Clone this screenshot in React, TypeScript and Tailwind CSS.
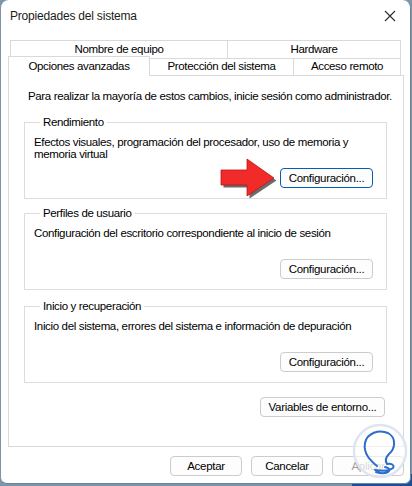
import React from 'react';

const font = { fontFamily: '"Liberation Sans", Arial, sans-serif' };

const Btn = ({ label, focused = false, disabled = false, w = 'w-[93px]' }: { label: string; focused?: boolean; disabled?: boolean; w?: string }) => (
  <button
    className={`${w} h-[20px] rounded-[4px] text-[11.5px] tracking-[-0.3px] leading-[18px] bg-[#fdfdfd] border ${
      focused ? 'border-[#005fb8]' : 'border-[#cccccc]'
    } ${disabled ? 'text-[#9d9d9d]' : 'text-black'}`}
  >
    {label}
  </button>
);

const Group = ({ title, lines, children }: { title: string; lines: string[]; children?: React.ReactNode }) => (
  <fieldset className="border border-[#dcdcdc] ml-[15px] w-[363px] pl-[9px] pr-[13px] pb-[10px]">
    <legend className="ml-[6px] px-[3px] leading-[14px]">{title}</legend>
    <div className="pt-[7px] h-[33px] leading-[12px]">
      {lines.map((l) => (
        <div key={l}>{l}</div>
      ))}
    </div>
    <div className="flex justify-end mt-[6px]">{children}</div>
  </fieldset>
);

export default function App() {
  return (
    <div className="w-[412px] h-[486px] bg-[#7d95a8] relative overflow-hidden text-[11.5px] tracking-[-0.35px]" style={font}>
      <div className="absolute right-0 bottom-0 w-[60px] h-[12px] bg-[#1b4f9c]" />
      <div className="relative ml-px w-[410px] h-[484px] bg-white rounded-t-[8px] rounded-b-[6px] border-r border-b border-[#6a8499] flex flex-col text-black">
        {/* title bar */}
        <div className="h-[32px] flex items-center justify-between pl-[9px] pr-[10px]">
          <span className="text-[12px] tracking-[-0.2px] text-[#1b1b1b]">Propiedades del sistema</span>
          <svg width="12" height="12" viewBox="0 0 12 12" className="mr-[4px]">
            <path d="M1 1 L11 11 M11 1 L1 11" stroke="#2b2b2b" strokeWidth="1.1" />
          </svg>
        </div>

        {/* tabs */}
        <div className="mt-[8px] ml-[9px] flex h-[18px]">
          <div className="w-[217px] border-t border-l border-[#d9d9d9] flex items-center justify-center">Nombre de equipo</div>
          <div className="w-[174px] border-t border-l border-r border-[#d9d9d9] flex items-center justify-center">Hardware</div>
        </div>
        <div className="ml-[7px] flex h-[18px] relative z-10">
          <div className="w-[142px] h-[20px] -mt-[2px] border-t border-l border-r border-[#d9d9d9] bg-white flex items-start justify-center pt-[1px]">
            Opciones avanzadas
          </div>
          <div className="w-[143px] border-t border-b border-[#d9d9d9] flex items-center justify-center">Protección del sistema</div>
          <div className="w-[108px] border-t border-l border-r border-b border-[#d9d9d9] flex items-center justify-center">Acceso remoto</div>
        </div>

        {/* panel */}
        <div className="ml-[7px] -mt-px w-[396px] h-[372px] border border-[#d9d9d9] flex flex-col">
          <p className="pl-[19px] pt-[13px] leading-[15px]">
            Para realizar la mayoría de estos cambios, inicie sesión como administrador.
          </p>
          <div className="mt-[11px]">
            <Group title="Rendimiento" lines={['Efectos visuales, programación del procesador, uso de memoria y', 'memoria virtual']}>
              <Btn label="Configuración..." focused />
            </Group>
          </div>
          <div className="mt-[7px]">
            <Group title="Perfiles de usuario" lines={['Configuración del escritorio correspondiente al inicio de sesión']}>
              <Btn label="Configuración..." />
            </Group>
          </div>
          <div className="mt-[9px]">
            <Group title="Inicio y recuperación" lines={['Inicio del sistema, errores del sistema e información de depuración']}>
              <Btn label="Configuración..." />
            </Group>
          </div>
          <div className="flex justify-end pr-[18px] mt-[14px]">
            <Btn label="Variables de entorno..." w="w-[125px]" />
          </div>
        </div>

        {/* dialog buttons */}
        <div className="flex justify-end gap-[9px] pr-[6px] mt-[9px]">
          <Btn label="Aceptar" w="w-[72px]" />
          <Btn label="Cancelar" w="w-[72px]" />
          <Btn label="Aplicar" w="w-[72px]" disabled />
        </div>

        {/* red arrow annotation */}
        <svg className="absolute left-[216px] top-[157px]" width="64" height="44" viewBox="0 0 64 44">
          <path d="M5 15 L31 15 L31 4 L58 22 L31 40 L31 29 L5 29 Z" fill="#3a3a3a" opacity="0.75" transform="translate(1.5 1.5)" />
          <path d="M4 13 L30 13 L30 2 L57 21 L30 39 L30 28 L4 28 Z" fill="#f12a2a" stroke="#b81818" strokeWidth="0.8" />
        </svg>

        {/* watermark */}
        <svg className="absolute left-[350px] top-[421px]" width="58" height="60" viewBox="0 0 58 60">
          <circle cx="29" cy="30" r="26" fill="white" fillOpacity="0.6" stroke="#dde6f0" strokeWidth="2.5" />
          <path
            d="M26 45 C20 40 12 33 14 22 C16 12 28 8 37 12 C46 17 44 28 38 33 C35 36 34 40 36 43 C40 42 44 44 42 47 C38 50 30 50 24 49 M34 46 C38 47 40 49 37 51 C33 53 28 52 25 51"
            fill="none"
            stroke="#2b6dcc"
            strokeWidth="2"
            strokeLinecap="round"
          />
        </svg>
      </div>
    </div>
  );
}
